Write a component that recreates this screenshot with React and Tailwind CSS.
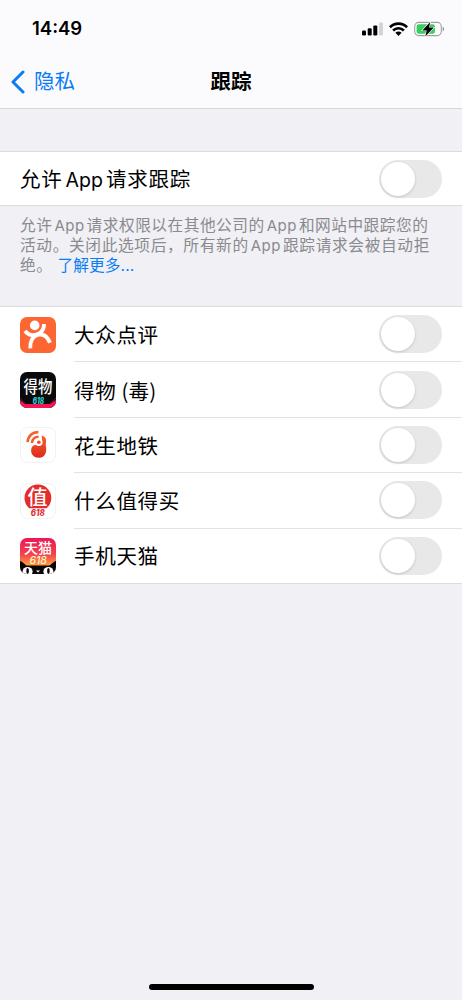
import React, { useState } from 'react';

const SignalIcon = () => (
  <svg className="w-[21px] h-[14px]" viewBox="0 0 21 14">
    <rect x="0" y="8.6" width="4" height="4.9" rx="1.2" fill="#000" />
    <rect x="5.7" y="6.2" width="4" height="7.3" rx="1.2" fill="#000" />
    <rect x="11.3" y="3.4" width="4" height="10.1" rx="1.2" fill="#000" />
    <rect x="17" y="0.6" width="4" height="12.9" rx="1.2" fill="#d4d4d7" />
  </svg>
);

const WifiIcon = () => (
  <svg className="w-[19px] h-[14px]" viewBox="0 0 19 14">
    <g fill="none" stroke="#000" strokeWidth="2.7">
      <path d="M0.9 5.2 C5.8 0.4 13.2 0.4 18.1 5.2" />
      <path d="M4.1 8.5 C7.2 5.5 11.8 5.5 14.9 8.5" />
    </g>
    <path d="M6.4 10.8 C8.2 9.2 10.8 9.2 12.6 10.8 L9.5 13.9 Z" fill="#000" />
  </svg>
);

const BatteryIcon = () => (
  <svg className="w-[31px] h-[16px]" viewBox="0 0 31 16">
    <rect x="0.7" y="1.4" width="26.6" height="13.2" rx="4" fill="none" stroke="#a0a0a3" strokeWidth="1.1" />
    <path d="M28.7 5.7 C30.6 6.3 30.6 9.7 28.7 10.3 Z" fill="#98989b" />
    <rect x="2.6" y="3.3" width="18.3" height="9.4" rx="2.2" fill="#36cf5e" />
    <path d="M16.2 0.9 L8.3 9.4 H12.7 L11.3 15.4 L19.8 6.6 H15.1 Z" fill="#000" stroke="#fbfbfd" strokeWidth="1.2" paintOrder="stroke" />
  </svg>
);

const DianpingIcon = () => (
  <svg className="w-9 h-9" viewBox="0 0 36 36">
    <rect width="36" height="36" rx="7" fill="#fd6533" />
    <circle cx="14.7" cy="8.4" r="4.8" fill="#fff" />
    <g fill="none" stroke="#fff" strokeWidth="3.8">
      <path d="M5 13.8 C8.4 18.6 14.6 19.4 19.3 16.4 C22.6 14.2 24.2 10.6 24 7" />
      <path d="M10.3 31.4 C9.7 25 12.4 19.5 17.4 18 C23.3 16.3 27.6 20 30 25.8" />
    </g>
  </svg>
);

const DewuIcon = () => (
  <svg className="w-9 h-9" viewBox="0 0 36 36">
    <clipPath id="dewu">
      <rect width="36" height="36" rx="7" />
    </clipPath>
    <g clipPath="url(#dewu)">
      <rect width="36" height="36" fill="#080a0b" />
      <path d="M0 28 L5 32 H30 L36 28 V36 H0 Z" fill="#f51555" />
      <path d="M0 26 L5 31.5 M36 26 L30 31.5" stroke="#7b1236" strokeWidth="1" />
      <text x="18" y="21" textAnchor="middle" transform="translate(0 -3.4) scale(1 1.18)" className="font-['Noto_Sans_CJK_SC',sans-serif] font-medium text-[14.4px]" fill="#fff">得物</text>
      <text x="18.4" y="31.6" textAnchor="middle" textLength="11.5" lengthAdjust="spacingAndGlyphs" className="font-['Inter',sans-serif] font-extrabold italic text-[8.5px]" fill="#20d8d9">618</text>
    </g>
  </svg>
);

const HuashengIcon = () => (
  <svg className="w-9 h-9" viewBox="0 0 36 36">
    <defs>
      <linearGradient id="peanut" x1="0" y1="0" x2="0" y2="1">
        <stop offset="0" stopColor="#f7602c" />
        <stop offset="1" stopColor="#dc2a1e" />
      </linearGradient>
    </defs>
    <rect x="0.5" y="0.5" width="35" height="35" rx="7" fill="#fff" stroke="#f2f2f3" />
    <g fill="none" stroke="#f4602d" strokeWidth="2.6">
      <path d="M7.6 15.2 C8 9 12.4 4.9 18.3 5.1" />
      <path d="M12 16 C12.2 12.2 14.8 9.8 18.6 9.8" />
    </g>
    <path d="M21.8 8.6 C25.6 9.6 27 12.8 25.8 16.5 C25.4 18.1 26.4 20 26.2 23 C26 28 23 30.8 18.7 30.8 C14 30.8 11 27.5 11.1 23.3 C11.2 20 13.2 18 16 17.8 L22 14 Z" fill="url(#peanut)" />
    <circle cx="18.8" cy="15.2" r="3.8" fill="#fff" />
    <circle cx="18.8" cy="15.2" r="1.8" fill="#ef4c28" />
  </svg>
);

const SmzdmIcon = () => (
  <svg className="w-9 h-9" viewBox="0 0 36 36">
    <rect x="0.5" y="0.5" width="35" height="35" rx="7" fill="#fff" stroke="#f2f2f3" />
    <path d="M9.2 25.2 A13.4 13.4 0 1 1 26.6 25.2 Z" fill="#e32c2b" />
    <text x="17.6" y="22" textAnchor="middle" className="font-['Noto_Sans_CJK_SC',sans-serif] font-medium text-[20px]" fill="#fff">值</text>
    <text x="17.8" y="33.4" textAnchor="middle" textLength="14" lengthAdjust="spacingAndGlyphs" className="font-['Inter',sans-serif] font-extrabold italic text-[9px]" fill="#df3034">618</text>
  </svg>
);

const TmallIcon = () => (
  <svg className="w-9 h-9" viewBox="0 0 36 36">
    <defs>
      <linearGradient id="tmall" x1="0" y1="0" x2="0" y2="1">
        <stop offset="0" stopColor="#ef1554" />
        <stop offset="0.45" stopColor="#f2424f" />
        <stop offset="0.75" stopColor="#fb9c3c" />
      </linearGradient>
      <clipPath id="tmallClip">
        <rect width="36" height="36" rx="7" />
      </clipPath>
    </defs>
    <g clipPath="url(#tmallClip)">
      <rect width="36" height="36" fill="url(#tmall)" />
      <path d="M0 23 C1.5 23 4 25.5 6.5 27.4 H29.5 C32 25.5 34.5 23 36 23 V36 H0 Z" fill="#0b0507" />
      <text x="18" y="15" textAnchor="middle" className="font-['Noto_Sans_CJK_SC',sans-serif] font-medium text-[14px]" fill="#fff">天猫</text>
      <text x="18.2" y="26.4" textAnchor="middle" className="font-['Inter',sans-serif] font-medium italic text-[10.5px]" fill="#fff3c9">618</text>
      <g fill="#fff">
        <ellipse cx="7.6" cy="33.6" rx="5" ry="4.6" />
        <ellipse cx="28.4" cy="33.6" rx="5" ry="4.6" />
        <path d="M16 32.4 H20 L18 34.6 Z" />
      </g>
      <ellipse cx="7.6" cy="33" rx="1.3" ry="3" fill="#0b0507" />
      <ellipse cx="28.4" cy="33" rx="1.3" ry="3" fill="#0b0507" />
    </g>
  </svg>
);

const apps = [
  { name: '大众点评', Icon: DianpingIcon },
  { name: '得物', alias: '(毒)', Icon: DewuIcon },
  { name: '花生地铁', Icon: HuashengIcon },
  { name: '什么值得买', Icon: SmzdmIcon },
  { name: '手机天猫', Icon: TmallIcon },
];

const Toggle = ({ label }) => {
  const [on, setOn] = useState(false);

  return (
    <button
      role="switch"
      aria-checked={on}
      aria-label={label}
      onClick={() => setOn(!on)}
      className={`w-[63px] h-[38px] shrink-0 rounded-full p-0.5 flex items-center ${on ? 'bg-[#34c759] justify-end' : 'bg-[#e8e8e9]'}`}
    >
      <span className="w-[34px] h-[34px] rounded-full bg-white shadow-[0_1px_3px_rgba(0,0,0,0.16)]" />
    </button>
  );
};

const App = () => {
  return (
    <div className="h-[1000px] w-[462px] overflow-hidden bg-[#f0f0f5] flex flex-col text-black font-['Inter','Noto_Sans_CJK_SC',sans-serif]">
      <header className="h-[109px] shrink-0 bg-[#fbfbfd] border-b border-[#d6d6da]">
        <div className="h-14 flex items-center justify-between pl-8 pr-[17px]">
          <span className="pt-0.5 text-[18.5px] font-semibold">14:49</span>
          <div className="flex items-center gap-[6px] pt-px">
            <SignalIcon />
            <WifiIcon />
            <BatteryIcon />
          </div>
        </div>
        <div className="h-[52px] grid grid-cols-[1fr_auto_1fr] items-center text-[20.5px]">
          <button className="flex items-center gap-[9px] pl-[11px] text-[#0a7cf5]">
            <svg className="w-[14px] h-6" viewBox="0 0 14 24">
              <path d="M12 2 L2 12 L12 22" fill="none" stroke="currentColor" strokeWidth="3" strokeLinecap="round" strokeLinejoin="round" />
            </svg>
            <span className="pt-px">隐私</span>
          </button>
          <h1 className="pt-px font-bold">跟踪</h1>
        </div>
      </header>

      <section className="mt-[42px] h-[55px] shrink-0 bg-white border-y border-[#dcdce0] flex items-center justify-between px-5">
        <span className="pt-1 text-[20.5px] tracking-[0.7px]">
          允许<span className="ml-[3px] mr-[3px] text-[19.5px] tracking-[0.1px]">App</span>请求跟踪
        </span>
        <Toggle label="允许App请求跟踪" />
      </section>

      <p className="mt-[10px] h-[90px] shrink-0 pl-5 text-[15.7px] leading-[20px] tracking-[0.5px] text-[#8a8a8f] whitespace-nowrap">
        允许<span className="mx-[2px] text-[15px]">App</span>请求权限以在其他公司的<span className="mx-[2px] text-[15px]">App</span>和网站中跟踪您的
        <br />
        <span className="tracking-[0.65px]">
          活动。关闭此选项后，所有新的<span className="mx-[2px] text-[15px] tracking-[0.5px]">App</span>跟踪请求会被自动拒
        </span>
        <br />
        绝。<a className="ml-[5px] tracking-[0.1px] text-[#0a7cf5]">了解更多...</a>
      </p>

      <ul className="shrink-0 bg-white border-y border-[#dcdce0]">
        {apps.map(({ name, alias, Icon }) => (
          <li key={name} className="group h-[55.4px] last:h-[54.6px] flex items-center pl-5">
            <Icon />
            <div className="ml-[18px] h-full flex-1 flex items-center justify-between pr-5 border-b border-[#e2e2e4] group-last:border-b-0">
              <span className="pt-1 text-[20.5px] tracking-[0.7px]">
                {name}
                {alias && <span className="ml-[5px] font-['Noto_Sans_CJK_SC',sans-serif] tracking-[0.2px]">{alias}</span>}
              </span>
              <Toggle label={name} />
            </div>
          </li>
        ))}
      </ul>

      <div className="mt-auto mb-[10px] mx-auto w-[165px] h-[6px] rounded-full bg-black" />
    </div>
  );
};

export default App;
